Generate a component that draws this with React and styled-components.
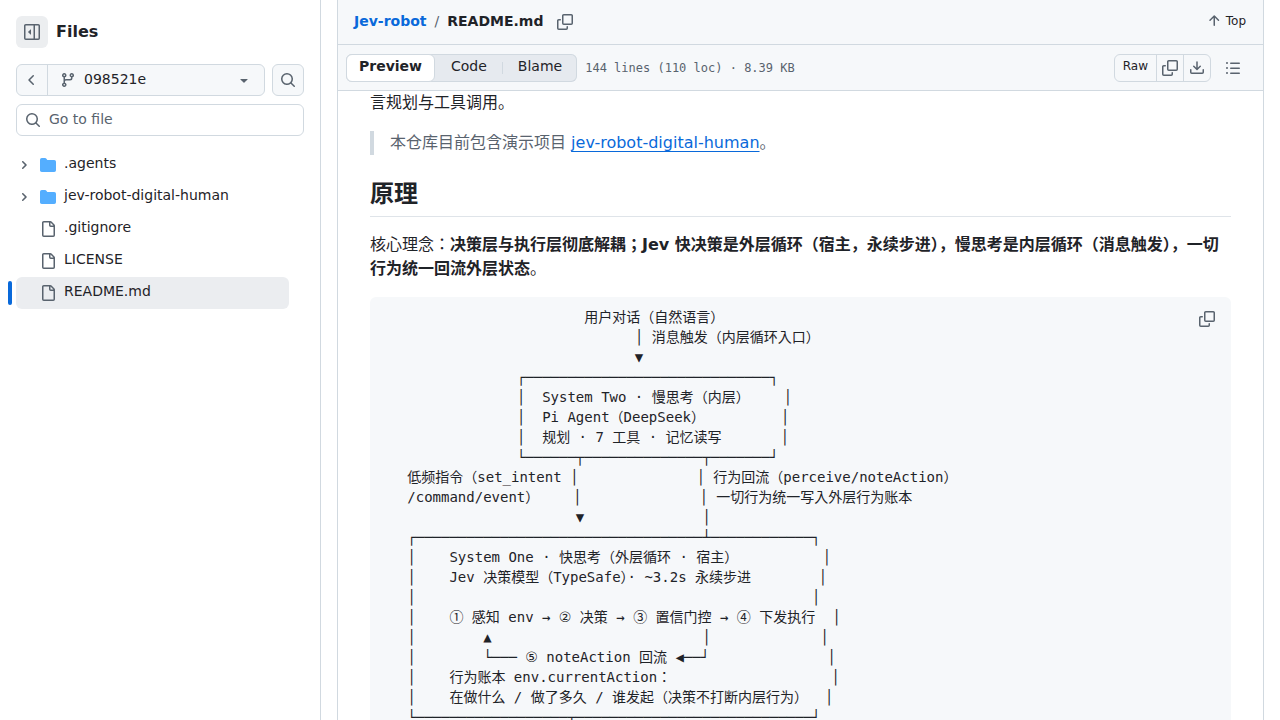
import React, { useState } from 'react';
import styled, { createGlobalStyle, css } from 'styled-components';

const sans = `"DejaVu Sans", "Noto Sans CJK JP", sans-serif`;
const mono = `"DejaVu Sans Mono", "Noto Sans CJK JP", monospace`;

const GlobalStyle = createGlobalStyle`
  * {
    box-sizing: border-box;
  }

  body {
    margin: 0;
    background: #ffffff;
    color: #1f2328;
    font-family: ${sans};
    font-size: 14px;
    line-height: 20px;
  }

  button,
  input {
    margin: 0;
    font: inherit;
    color: inherit;
  }
`;

const paths = {
  sidebar: [
    'm4.177 7.823 2.396-2.396A.25.25 0 0 1 7 5.604v4.792a.25.25 0 0 1-.427.177L4.177 8.177a.25.25 0 0 1 0-.354Z',
    'M0 1.75C0 .784.784 0 1.75 0h12.5C15.216 0 16 .784 16 1.75v12.5A1.75 1.75 0 0 1 14.25 16H1.75A1.75 1.75 0 0 1 0 14.25Zm1.75-.25a.25.25 0 0 0-.25.25v12.5c0 .138.112.25.25.25H9.5v-13Zm12.5 13a.25.25 0 0 0 .25-.25V1.75a.25.25 0 0 0-.25-.25H11v13Z',
  ],
  chevronLeft: [
    'M9.78 12.78a.75.75 0 0 1-1.06 0L4.47 8.53a.75.75 0 0 1 0-1.06l4.25-4.25a.751.751 0 0 1 1.042.018.751.751 0 0 1 .018 1.042L6.06 8l3.72 3.72a.75.75 0 0 1 0 1.06Z',
  ],
  chevronRight: [
    'M4.7 10c-.2 0-.4-.1-.5-.2-.3-.3-.3-.8 0-1.1L6.9 6 4.2 3.3c-.3-.3-.3-.8 0-1.1.3-.3.8-.3 1.1 0l3.3 3.2c.3.3.3.8 0 1.1L5.3 9.7c-.2.2-.4.3-.6.3Z',
  ],
  branch: [
    'M9.5 3.25a2.25 2.25 0 1 1 3 2.122V6A2.5 2.5 0 0 1 10 8.5H6a1 1 0 0 0-1 1v1.128a2.251 2.251 0 1 1-1.5 0V5.372a2.25 2.25 0 1 1 1.5 0v1.836A2.493 2.493 0 0 1 6 7h4a1 1 0 0 0 1-1v-.628A2.25 2.25 0 0 1 9.5 3.25Zm-6 0a.75.75 0 1 0 1.5 0 .75.75 0 0 0-1.5 0Zm8.25-.75a.75.75 0 1 0 0 1.5.75.75 0 0 0 0-1.5ZM4.25 12a.75.75 0 1 0 0 1.5.75.75 0 0 0 0-1.5Z',
  ],
  triangle: [
    'm4.427 7.427 3.396 3.396a.25.25 0 0 0 .354 0l3.396-3.396A.25.25 0 0 0 11.396 7H4.604a.25.25 0 0 0-.177.427Z',
  ],
  search: [
    'M10.68 11.74a6 6 0 0 1-7.922-8.982 6 6 0 0 1 8.982 7.922l3.04 3.04a.749.749 0 0 1-.326 1.275.749.749 0 0 1-.734-.215ZM11.5 7a4.499 4.499 0 1 0-8.997 0A4.499 4.499 0 0 0 11.5 7Z',
  ],
  folder: [
    'M1.75 1A1.75 1.75 0 0 0 0 2.75v10.5C0 14.216.784 15 1.75 15h12.5A1.75 1.75 0 0 0 16 13.25v-8.5A1.75 1.75 0 0 0 14.25 3H7.5a.25.25 0 0 1-.2-.1l-.9-1.2C6.07 1.26 5.55 1 5 1H1.75Z',
  ],
  file: [
    'M2 1.75C2 .784 2.784 0 3.75 0h6.586c.464 0 .909.184 1.237.513l2.914 2.914c.329.328.513.773.513 1.237v9.586A1.75 1.75 0 0 1 13.25 16h-9.5A1.75 1.75 0 0 1 2 14.25Zm1.75-.25a.25.25 0 0 0-.25.25v12.5c0 .138.112.25.25.25h9.5a.25.25 0 0 0 .25-.25V6h-2.75A1.75 1.75 0 0 1 9 4.25V1.5Zm6.75.062V4.25c0 .138.112.25.25.25h2.688l-.011-.013-2.914-2.914-.013-.011Z',
  ],
  copy: [
    'M0 6.75C0 5.784.784 5 1.75 5h1.5a.75.75 0 0 1 0 1.5h-1.5a.25.25 0 0 0-.25.25v7.5c0 .138.112.25.25.25h7.5a.25.25 0 0 0 .25-.25v-1.5a.75.75 0 0 1 1.5 0v1.5A1.75 1.75 0 0 1 9.25 16h-7.5A1.75 1.75 0 0 1 0 14.25Z',
    'M5 1.75C5 .784 5.784 0 6.75 0h7.5C15.216 0 16 .784 16 1.75v7.5A1.75 1.75 0 0 1 14.25 11h-7.5A1.75 1.75 0 0 1 5 9.25Zm1.75-.25a.25.25 0 0 0-.25.25v7.5c0 .138.112.25.25.25h7.5a.25.25 0 0 0 .25-.25v-7.5a.25.25 0 0 0-.25-.25Z',
  ],
  arrowUp: [
    'M3.47 7.78a.75.75 0 0 1 0-1.06l4.25-4.25a.75.75 0 0 1 1.06 0l4.25 4.25a.751.751 0 0 1-.018 1.042.751.751 0 0 1-1.042.018L9 4.81v7.44a.75.75 0 0 1-1.5 0V4.81L4.53 7.78a.75.75 0 0 1-1.06 0Z',
  ],
  download: [
    'M2.75 14A1.75 1.75 0 0 1 1 12.25v-2.5a.75.75 0 0 1 1.5 0v2.5c0 .138.112.25.25.25h10.5a.25.25 0 0 0 .25-.25v-2.5a.75.75 0 0 1 1.5 0v2.5A1.75 1.75 0 0 1 13.25 14Z',
    'M7.25 7.689V2a.75.75 0 0 1 1.5 0v5.689l1.97-1.969a.749.749 0 1 1 1.06 1.06l-3.25 3.25a.749.749 0 0 1-1.06 0L4.22 6.78a.749.749 0 1 1 1.06-1.06l1.97 1.969Z',
  ],
  list: [
    'M5.75 2.5h8.5a.75.75 0 0 1 0 1.5h-8.5a.75.75 0 0 1 0-1.5Zm0 5h8.5a.75.75 0 0 1 0 1.5h-8.5a.75.75 0 0 1 0-1.5Zm0 5h8.5a.75.75 0 0 1 0 1.5h-8.5a.75.75 0 0 1 0-1.5ZM2 14a1 1 0 1 1 0-2 1 1 0 0 1 0 2Zm1-6a1 1 0 1 1-2 0 1 1 0 0 1 2 0ZM2 4a1 1 0 1 1 0-2 1 1 0 0 1 0 2Z',
  ],
};

const Svg = styled.svg`
  display: block;
  flex: none;
  fill: ${(props) => props.$color || '#59636e'};
`;

const Icon = ({ name, size = 16, box = 16, color }) => (
  <Svg width={size} height={size} viewBox={`0 0 ${box} ${box}`} $color={color} aria-hidden="true">
    {paths[name].map((d) => (
      <path key={d} d={d} />
    ))}
  </Svg>
);

const Shell = styled.div`
  display: flex;
  height: 100vh;
  overflow: hidden;
`;

const Sidebar = styled.aside`
  flex: none;
  width: 321px;
  padding: 16px;
  border-right: 1px solid #d1d9e0;
`;

const SidebarHeader = styled.div`
  display: flex;
  align-items: center;
  gap: 8px;
  margin-bottom: 16px;
`;

const SidebarTitle = styled.h2`
  margin: 0;
  font-size: 16px;
  line-height: 24px;
`;

const IconButton = styled.button`
  display: flex;
  align-items: center;
  justify-content: center;
  flex: none;
  width: 32px;
  height: 32px;
  padding: 0;
  border: 1px solid ${(props) => (props.$outlined ? '#d1d9e0' : 'transparent')};
  border-radius: 6px;
  background: ${(props) => (props.$filled ? '#eceef0' : props.$outlined ? '#f6f8fa' : 'transparent')};
`;

const BranchRow = styled.div`
  display: flex;
  gap: 7px;
  margin-bottom: 8px;
`;

const BranchGroup = styled.div`
  display: flex;
  flex: 1;
  height: 32px;
  border: 1px solid #d1d9e0;
  border-radius: 6px;
  background: #f6f8fa;
  overflow: hidden;
`;

const BackButton = styled.button`
  display: flex;
  align-items: center;
  justify-content: center;
  width: 31px;
  padding: 0;
  border: 0;
  border-right: 1px solid #d1d9e0;
  background: transparent;
`;

const BranchButton = styled.button`
  display: flex;
  flex: 1;
  align-items: center;
  gap: 8px;
  padding: 0 12px;
  border: 0;
  background: transparent;
  text-align: left;
`;

const BranchName = styled.span`
  flex: 1;
  padding-bottom: 2px;
`;

const FileSearch = styled.label`
  display: flex;
  align-items: center;
  gap: 8px;
  height: 32px;
  padding: 0 8px;
  border: 1px solid #d1d9e0;
  border-radius: 6px;
  margin-bottom: 13px;
`;

const SearchInput = styled.input`
  flex: 1;
  min-width: 0;
  height: 20px;
  padding: 0 0 2px;
  border: 0;
  outline: 0;
  background: transparent;

  &::placeholder {
    color: #59636e;
    opacity: 1;
  }
`;

const Tree = styled.ul`
  margin: 0 15px 0 0;
  padding: 0;
  list-style: none;
`;

const TreeItem = styled.li`
  position: relative;
  border-radius: 6px;

  ${(props) =>
    props.$active &&
    css`
      background: #ebedf0;

      &::before {
        content: '';
        position: absolute;
        left: -8px;
        top: 4px;
        width: 4px;
        height: 24px;
        border-radius: 6px;
        background: #0969da;
      }
    `}
`;

const TreeButton = styled.button`
  display: grid;
  grid-template-columns: 16px 16px 1fr;
  align-items: center;
  column-gap: 8px;
  width: 100%;
  height: 32px;
  padding: 0;
  border: 0;
  background: transparent;
  text-align: left;
`;

const TreeToggle = styled.span`
  display: flex;
  justify-content: center;
`;

const TreeLabel = styled.span`
  padding-bottom: 4px;
`;

const Main = styled.main`
  flex: 1;
  min-width: 0;
  margin: 0 16px;
  border: 1px solid #d1d9e0;
  border-width: 0 1px;
`;

const PathBar = styled.header`
  display: flex;
  align-items: center;
  justify-content: space-between;
  height: 45px;
  padding: 0 16px;
  border-bottom: 1px solid #d1d9e0;
  background: #f6f8fa;
`;

const Breadcrumb = styled.nav`
  display: flex;
  align-items: center;
  gap: 8px;
  font-weight: 600;
`;

const CrumbLink = styled.a`
  padding-bottom: 2px;
  color: #0969da;
  text-decoration: none;
`;

const Slash = styled.span`
  padding-bottom: 2px;
  color: #59636e;
  font-weight: 400;
`;

const CrumbName = styled.span`
  padding-bottom: 2px;
`;

const CopyPath = styled.button`
  padding: 0 6px;
  border: 0;
  background: transparent;
`;

const TopButton = styled.button`
  display: flex;
  align-items: center;
  gap: 4px;
  padding: 0 1px 2px 0;
  border: 0;
  background: transparent;
  font-size: 12px;
`;

const Toolbar = styled.div`
  display: flex;
  align-items: center;
  justify-content: space-between;
  height: 46px;
  padding: 0 16px 0 8px;
  border-bottom: 1px solid #d1d9e0;
  background: #f6f8fa;
`;

const ToolGroup = styled.div`
  display: flex;
  align-items: center;
  gap: 8px;
`;

const Segmented = styled.div`
  display: flex;
  height: 28px;
  border-radius: 6px;
  background: #e6eaef;
  box-shadow: inset 0 0 0 1px #d1d9e0;
`;

const Segment = styled.button`
  display: flex;
  align-items: center;
  padding: 0 15px 4px 16px;
  border: 0;
  background: transparent;

  ${(props) =>
    props.$active &&
    css`
      padding: 0 12px 4px;
      border: 1px solid #d1d9e0;
      border-radius: 6px;
      background: #ffffff;
      font-weight: 600;
    `}
`;

const Divider = styled.span`
  align-self: center;
  width: 1px;
  height: 12px;
  margin-right: -1px;
  background: #d1d9e0;
`;

const FileInfo = styled.span`
  color: #59636e;
  font-family: ${mono};
  font-size: 12px;
`;

const ActionGroup = styled.div`
  display: flex;
  height: 28px;
  border: 1px solid #d1d9e0;
  border-radius: 6px;
  overflow: hidden;
`;

const Action = styled.button`
  display: flex;
  align-items: center;
  justify-content: center;
  min-width: 27px;
  padding: ${(props) => (props.$text ? '0 8px 4px' : '0')};
  border: 0;
  background: transparent;
  font-size: 12px;

  & + & {
    border-left: 1px solid #d1d9e0;
  }
`;

const OutlineButton = styled(Action)`
  width: 28px;
  height: 28px;
`;

const Article = styled.article`
  padding: 0 32px 32px;
  font-size: 16px;
  line-height: 24px;
`;

const Paragraph = styled.p`
  margin: 0 0 16px;
`;

const Quote = styled.blockquote`
  margin: 0 0 24px;
  padding: 0 16px;
  border-left: 4px solid #d1d9e0;
  color: #59636e;
`;

const Link = styled.a`
  color: #0969da;
  text-decoration: underline;
  text-underline-offset: 3px;
`;

const Heading = styled.h2`
  margin: 0 0 16px;
  padding-bottom: 7px;
  border-bottom: 1px solid #dfe4e9;
  font-size: 24px;
  line-height: 30px;
`;

const CodeBlock = styled.div`
  position: relative;
  border-radius: 6px;
  background: #f6f8fa;
`;

const Pre = styled.pre`
  margin: 0;
  padding: 10px 12px;
  overflow: hidden;
  font-family: ${mono};
  font-size: 14px;
  line-height: 20px;
`;

const Line = styled.span`
  display: block;
  height: 20px;
`;

const Circled = styled.span`
  font-family: ${sans};
`;

const CopyCode = styled(IconButton)`
  position: absolute;
  top: 6px;
  right: 8px;
`;

const files = [
  { name: '.agents', folder: true },
  { name: 'jev-robot-digital-human', folder: true },
  { name: '.gitignore' },
  { name: 'LICENSE' },
  { name: 'README.md' },
];

const sp = (n) => ' '.repeat(n);
const bar = (n) => '─'.repeat(n);

const diagram = [
  `${sp(24)}用户对话（自然语言）`,
  `${sp(30)}│ 消息触发（内层循环入口）`,
  `${sp(30)}▼`,
  `${sp(16)}┌${bar(29)}┐`,
  `${sp(16)}│  System Two · 慢思考（内层）${sp(4)}│`,
  `${sp(16)}│  Pi Agent（DeepSeek）${sp(9)}│`,
  `${sp(16)}│  规划 · 7 工具 · 记忆读写${sp(7)}│`,
  `${sp(16)}└${bar(6)}┬${bar(14)}┬${bar(7)}┘`,
  `${sp(3)}低频指令（set_intent │${sp(14)}│ 行为回流（perceive/noteAction）`,
  `${sp(3)}/command/event）${sp(4)}│${sp(14)}│ 一切行为统一写入外层行为账本`,
  `${sp(23)}▼${sp(14)}│`,
  `${sp(3)}┌${bar(34)}┴${bar(12)}┐`,
  `${sp(3)}│    System One · 快思考（外层循环 · 宿主）${sp(10)}│`,
  `${sp(3)}│    Jev 决策模型（TypeSafe）· ~3.2s 永续步进${sp(8)}│`,
  `${sp(3)}│${sp(47)}│`,
  `${sp(3)}│    ① 感知 env → ② 决策 → ③ 置信门控 → ④ 下发执行  │`,
  `${sp(3)}│${sp(8)}▲${sp(25)}│${sp(13)}│`,
  `${sp(3)}│${sp(8)}└${bar(3)} ⑤ noteAction 回流 ◀${bar(2)}┘${sp(14)}│`,
  `${sp(3)}│    行为账本 env.currentAction：${sp(19)}│`,
  `${sp(3)}│    在做什么 / 做了多久 / 谁发起（决策不打断内层行为）  │`,
  `${sp(3)}└${bar(18)}┬${bar(28)}┘`,
];

const FileTree = () => {
  const [selected, setSelected] = useState('README.md');

  return (
    <Tree>
      {files.map(({ name, folder }) => (
        <TreeItem key={name} $active={selected === name}>
          <TreeButton type="button" onClick={() => setSelected(name)}>
            <TreeToggle>{folder && <Icon name="chevronRight" size={12} box={12} />}</TreeToggle>
            <Icon name={folder ? 'folder' : 'file'} color={folder ? '#54aeff' : undefined} />
            <TreeLabel>{name}</TreeLabel>
          </TreeButton>
        </TreeItem>
      ))}
    </Tree>
  );
};

const App = () => {
  const [view, setView] = useState('Preview');

  return (
    <Shell>
      <GlobalStyle />
      <Sidebar>
        <SidebarHeader>
          <IconButton type="button" $filled aria-label="Collapse file tree">
            <Icon name="sidebar" />
          </IconButton>
          <SidebarTitle>Files</SidebarTitle>
        </SidebarHeader>
        <BranchRow>
          <BranchGroup>
            <BackButton type="button" aria-label="Back">
              <Icon name="chevronLeft" />
            </BackButton>
            <BranchButton type="button">
              <Icon name="branch" />
              <BranchName>098521e</BranchName>
              <Icon name="triangle" />
            </BranchButton>
          </BranchGroup>
          <IconButton type="button" $outlined aria-label="Search this repository">
            <Icon name="search" />
          </IconButton>
        </BranchRow>
        <FileSearch>
          <Icon name="search" />
          <SearchInput type="text" placeholder="Go to file" aria-label="Go to file" />
        </FileSearch>
        <FileTree />
      </Sidebar>

      <Main>
        <PathBar>
          <Breadcrumb>
            <CrumbLink href="#repo">Jev-robot</CrumbLink>
            <Slash>/</Slash>
            <CrumbName>README.md</CrumbName>
            <CopyPath type="button" aria-label="Copy path">
              <Icon name="copy" />
            </CopyPath>
          </Breadcrumb>
          <TopButton type="button">
            <Icon name="arrowUp" />
            Top
          </TopButton>
        </PathBar>
        <Toolbar>
          <ToolGroup>
            <Segmented>
              {['Preview', 'Code', 'Blame'].map((label) => (
                <React.Fragment key={label}>
                  {label === 'Blame' && <Divider />}
                  <Segment type="button" $active={view === label} onClick={() => setView(label)}>
                    {label}
                  </Segment>
                </React.Fragment>
              ))}
            </Segmented>
            <FileInfo>144 lines (110 loc) · 8.39 KB</FileInfo>
          </ToolGroup>
          <ToolGroup>
            <ActionGroup>
              <Action type="button" $text>
                Raw
              </Action>
              <Action type="button" aria-label="Copy raw file">
                <Icon name="copy" />
              </Action>
              <Action type="button" aria-label="Download raw file">
                <Icon name="download" />
              </Action>
            </ActionGroup>
            <OutlineButton type="button" aria-label="Outline">
              <Icon name="list" />
            </OutlineButton>
          </ToolGroup>
        </Toolbar>

        <Article>
          <Paragraph>言规划与工具调用。</Paragraph>
          <Quote>
            本仓库目前包含演示项目 <Link href="#demo">jev-robot-digital-human</Link>。
          </Quote>
          <Heading>原理</Heading>
          <Paragraph>
            核心理念：
            <strong>
              决策层与执行层彻底解耦；Jev 快决策是外层循环（宿主，永续步进），慢思考是内层循环（消息触发），一切行为统一回流外层状态
            </strong>
            。
          </Paragraph>
          <CodeBlock>
            <Pre>
              {diagram.map((line, row) => (
                <Line key={row}>
                  {line
                    .split(/([②⑤])/)
                    .map((part, i) => (i % 2 ? <Circled key={i}>{part}</Circled> : part))}
                </Line>
              ))}
            </Pre>
            <CopyCode type="button" aria-label="Copy">
              <Icon name="copy" />
            </CopyCode>
          </CodeBlock>
        </Article>
      </Main>
    </Shell>
  );
};

export default App;
